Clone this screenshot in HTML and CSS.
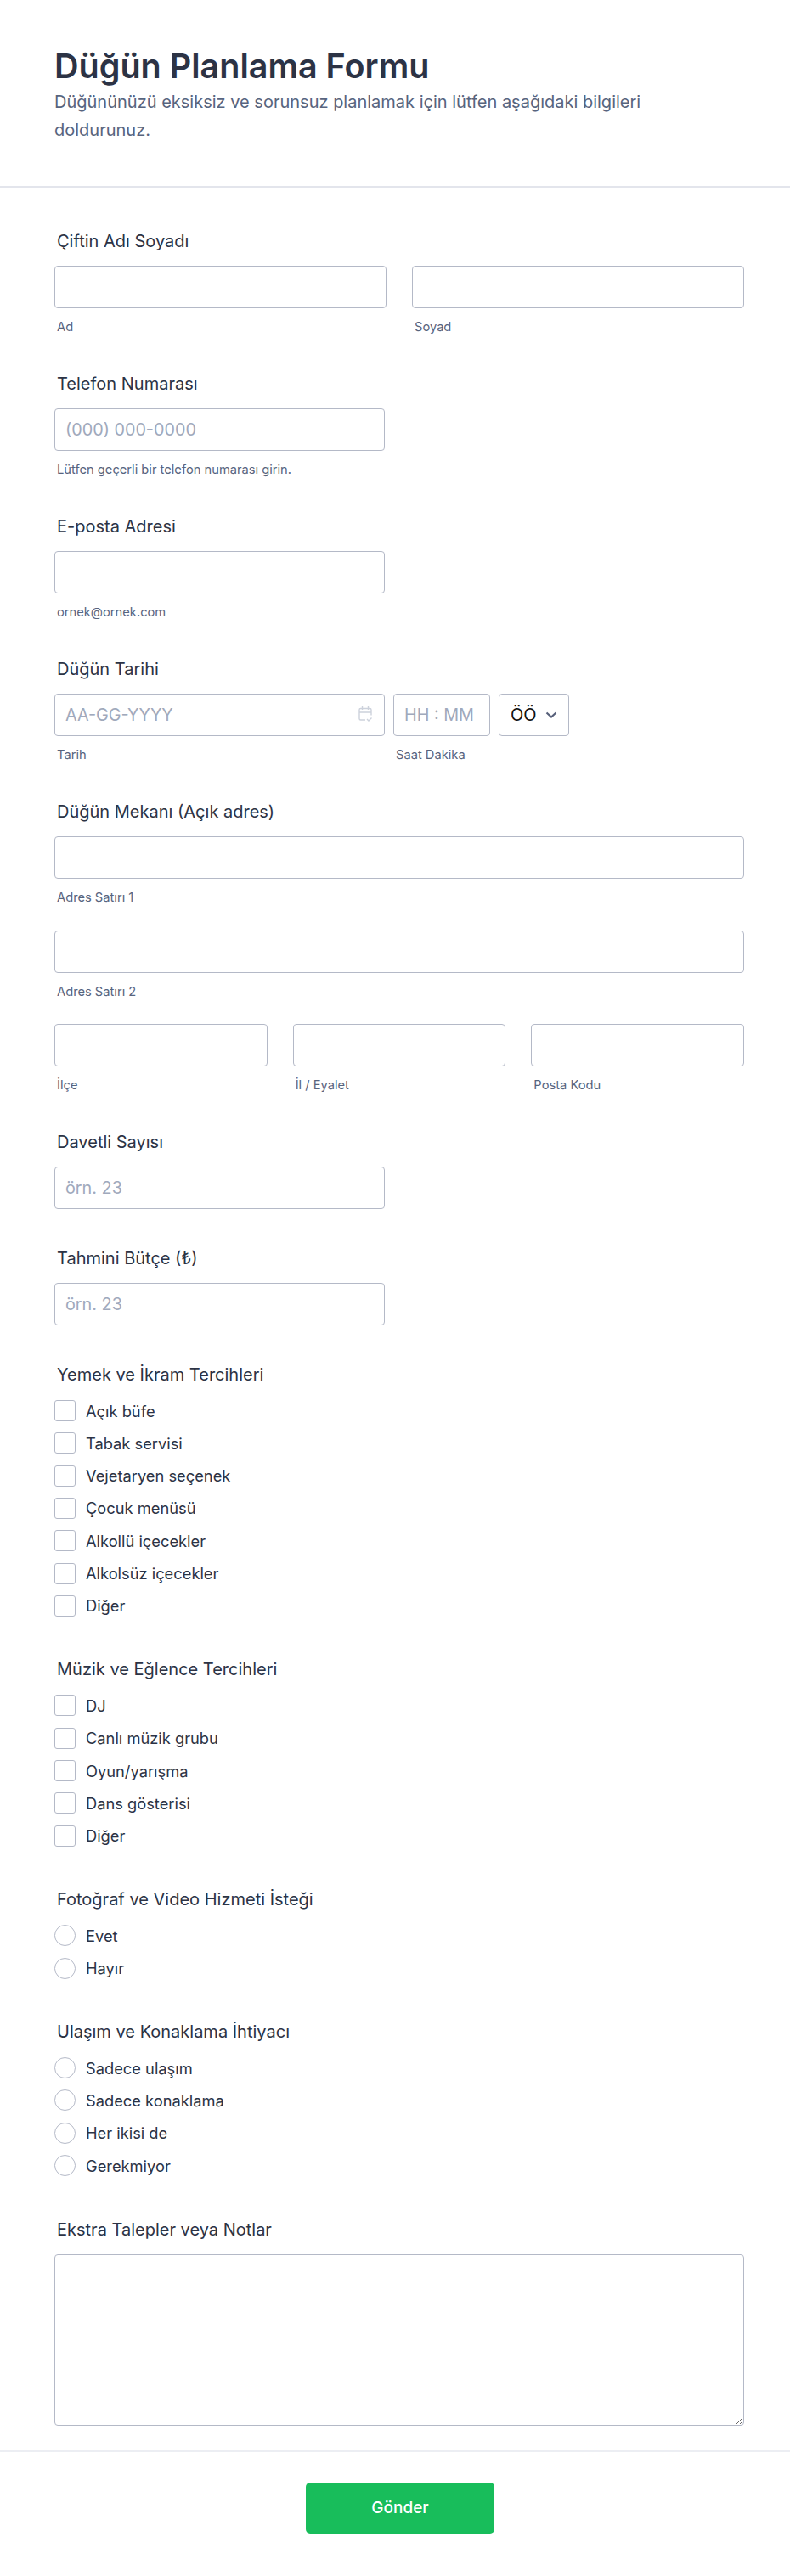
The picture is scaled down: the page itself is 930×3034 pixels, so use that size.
FILE: index.html

```html
<!DOCTYPE html>
<html lang="tr">
<head>
  <meta charset="UTF-8" />
  <meta name="viewport" content="width=device-width, initial-scale=1.0"/>
  <title>Düğün Planlama Formu</title>
  <link rel="stylesheet" href="styles.css">
</head>
<body>
  <form class="form">
    <div class="form-header">
      <h1>Düğün Planlama Formu</h1>
      <p>Düğününüzü eksiksiz ve sorunsuz planlamak için lütfen aşağıdaki bilgileri doldurunuz.</p>
    </div>

    <div class="form-body">
      <div class="field">
        <div class="label">Çiftin Adı Soyadı</div>
        <div class="row two">
          <div><input class="input" type="text"><div class="sub">Ad</div></div>
          <div><input class="input" type="text"><div class="sub">Soyad</div></div>
        </div>
      </div>

      <div class="field">
        <div class="label">Telefon Numarası</div>
        <input class="input half" type="text" placeholder="(000) 000-0000">
        <div class="sub">Lütfen geçerli bir telefon numarası girin.</div>
      </div>

      <div class="field">
        <div class="label">E-posta Adresi</div>
        <input class="input half" type="text">
        <div class="sub">ornek@ornek.com</div>
      </div>

      <div class="field">
        <div class="label">Düğün Tarihi</div>
        <div class="row date-row">
          <div>
            <div class="date-box">
              <input class="input" type="text" placeholder="AA-GG-YYYY">
              <svg class="date-icon" width="18" height="20" viewBox="0 0 18 20" fill="none" stroke="#cdd2dc" stroke-width="1.400">
                <path d="M9 17H3.500A1.500 1.500 0 0 1 2 15.500V5A1.500 1.500 0 0 1 3.500 3.500h11A1.500 1.500 0 0 1 16 5v6.500"/>
                <path d="M2 8h14M5.500 1v4M12.500 1v4"/>
                <path d="M11 16l2 2 3.500-3.500"/>
              </svg>
            </div>
            <div class="sub">Tarih</div>
          </div>
          <div>
            <input class="input" type="text" placeholder="HH : MM">
            <div class="sub">Saat Dakika</div>
          </div>
          <div class="ampm">
            <span>ÖÖ</span>
            <svg width="14" height="9" viewBox="0 0 14 9" fill="none" stroke="#57607a" stroke-width="2.200"><path d="M1.500 1.500L7 6.500l5.500-5"/></svg>
          </div>
        </div>
      </div>

      <div class="field">
        <div class="label">Düğün Mekanı (Açık adres)</div>
        <input class="input" type="text">
        <div class="sub">Adres Satırı 1</div>
        <input class="input next" type="text">
        <div class="sub">Adres Satırı 2</div>
        <div class="row three next">
          <div><input class="input" type="text"><div class="sub">İlçe</div></div>
          <div><input class="input" type="text"><div class="sub">İl / Eyalet</div></div>
          <div><input class="input" type="text"><div class="sub">Posta Kodu</div></div>
        </div>
      </div>

      <div class="field">
        <div class="label">Davetli Sayısı</div>
        <input class="input half" type="text" placeholder="örn. 23">
      </div>

      <div class="field">
        <div class="label">Tahmini Bütçe (₺)</div>
        <input class="input half" type="text" placeholder="örn. 23">
      </div>

      <div class="field options">
        <div class="label">Yemek ve İkram Tercihleri</div>
        <label class="option"><input type="checkbox"><span>Açık büfe</span></label>
        <label class="option"><input type="checkbox"><span>Tabak servisi</span></label>
        <label class="option"><input type="checkbox"><span>Vejetaryen seçenek</span></label>
        <label class="option"><input type="checkbox"><span>Çocuk menüsü</span></label>
        <label class="option"><input type="checkbox"><span>Alkollü içecekler</span></label>
        <label class="option"><input type="checkbox"><span>Alkolsüz içecekler</span></label>
        <label class="option"><input type="checkbox"><span>Diğer</span></label>
      </div>

      <div class="field options">
        <div class="label">Müzik ve Eğlence Tercihleri</div>
        <label class="option"><input type="checkbox"><span>DJ</span></label>
        <label class="option"><input type="checkbox"><span>Canlı müzik grubu</span></label>
        <label class="option"><input type="checkbox"><span>Oyun/yarışma</span></label>
        <label class="option"><input type="checkbox"><span>Dans gösterisi</span></label>
        <label class="option"><input type="checkbox"><span>Diğer</span></label>
      </div>

      <div class="field options">
        <div class="label">Fotoğraf ve Video Hizmeti İsteği</div>
        <label class="option"><input type="radio" name="foto"><span>Evet</span></label>
        <label class="option"><input type="radio" name="foto"><span>Hayır</span></label>
      </div>

      <div class="field options">
        <div class="label">Ulaşım ve Konaklama İhtiyacı</div>
        <label class="option"><input type="radio" name="ulasim"><span>Sadece ulaşım</span></label>
        <label class="option"><input type="radio" name="ulasim"><span>Sadece konaklama</span></label>
        <label class="option"><input type="radio" name="ulasim"><span>Her ikisi de</span></label>
        <label class="option"><input type="radio" name="ulasim"><span>Gerekmiyor</span></label>
      </div>

      <div class="field">
        <div class="label">Ekstra Talepler veya Notlar</div>
        <textarea class="input notes"></textarea>
      </div>
    </div>

    <div class="form-footer">
      <button class="submit" type="button">Gönder</button>
    </div>
  </form>
</body>
</html>
```

FILE: styles.css

```css
* {
  box-sizing: border-box;
}

body {
  margin: 0;
  background-color: #fff;
  font-family: Inter, "Liberation Sans", sans-serif;
  color: #2c3345;
}

.form-header {
  height: 221px;
  padding: 52px 64px 0;
  border-bottom: 2px solid #e3e5ec;
}

.form-header h1 {
  margin: 0;
  font-size: 39.500px;
  line-height: 52px;
  font-weight: 600;
}

.form-header p {
  margin: 0;
  max-width: 700px;
  font-size: 20px;
  line-height: 33px;
  color: #57647e;
}

.form-body {
  padding: 50px 54px 0 64px;
}

.field {
  margin-bottom: 45px;
}

.field:last-child {
  margin-bottom: 29px;
}

.options {
  margin-bottom: 49.500px;
}

.options .label {
  margin-bottom: 17px;
}

.label {
  margin-left: 3px;
  margin-bottom: 16px;
  font-size: 20px;
  line-height: 26px;
  font-weight: 400;
}

.input {
  display: block;
  width: 100%;
  height: 50px;
  padding: 0 12px;
  background-color: #fff;
  border: 1px solid #b4b9c7;
  border-radius: 4px;
  font-family: inherit;
  font-size: 19.800px;
  color: #2c3345;
}

.input::placeholder {
  color: #a0a9bc;
}

.half {
  width: 389px;
}

.next {
  margin-top: 29.500px;
}

.sub {
  margin: 13px 0 0 3px;
  font-size: 14.700px;
  line-height: 18px;
  color: #57647e;
}

.row {
  display: grid;
  gap: 30px;
}

.two {
  grid-template-columns: 1fr 1fr;
}

.three {
  grid-template-columns: 1fr 1fr 1fr;
}

.date-row {
  grid-template-columns: 389px 114px 83px;
  gap: 10px;
}

.date-box {
  position: relative;
}

.date-icon {
  position: absolute;
  top: 14px;
  right: 14px;
}

.ampm {
  display: flex;
  align-items: center;
  justify-content: space-between;
  height: 50px;
  padding: 0 13px 0 13px;
  border: 1px solid #b4b9c7;
  border-radius: 4px;
  font-size: 20px;
  color: #111;
}

.option {
  display: flex;
  align-items: center;
  gap: 12px;
  height: 25px;
  margin-bottom: 13.330px;
  font-size: 18.300px;
  color: #2c3345;
}

.option:last-child {
  margin-bottom: 0;
}

.option input {
  appearance: none;
  width: 25px;
  height: 25px;
  margin: 0;
  border: 1px solid #b4b9c7;
  border-radius: 3px;
  background-color: #fff;
}

.option input[type="radio"] {
  border-radius: 50%;
}

.notes {
  height: 202px;
  padding: 10px 12px;
  resize: vertical;
}

.form-footer {
  display: flex;
  justify-content: center;
  height: 148px;
  padding: 36px 0 0 12px;
  border-top: 2px solid #eceef3;
}

.submit {
  width: 222px;
  height: 60px;
  border: none;
  border-radius: 5px;
  background-color: #18bd5b;
  color: #fff;
  font-family: inherit;
  font-size: 19px;
  font-weight: 500;
}
```
